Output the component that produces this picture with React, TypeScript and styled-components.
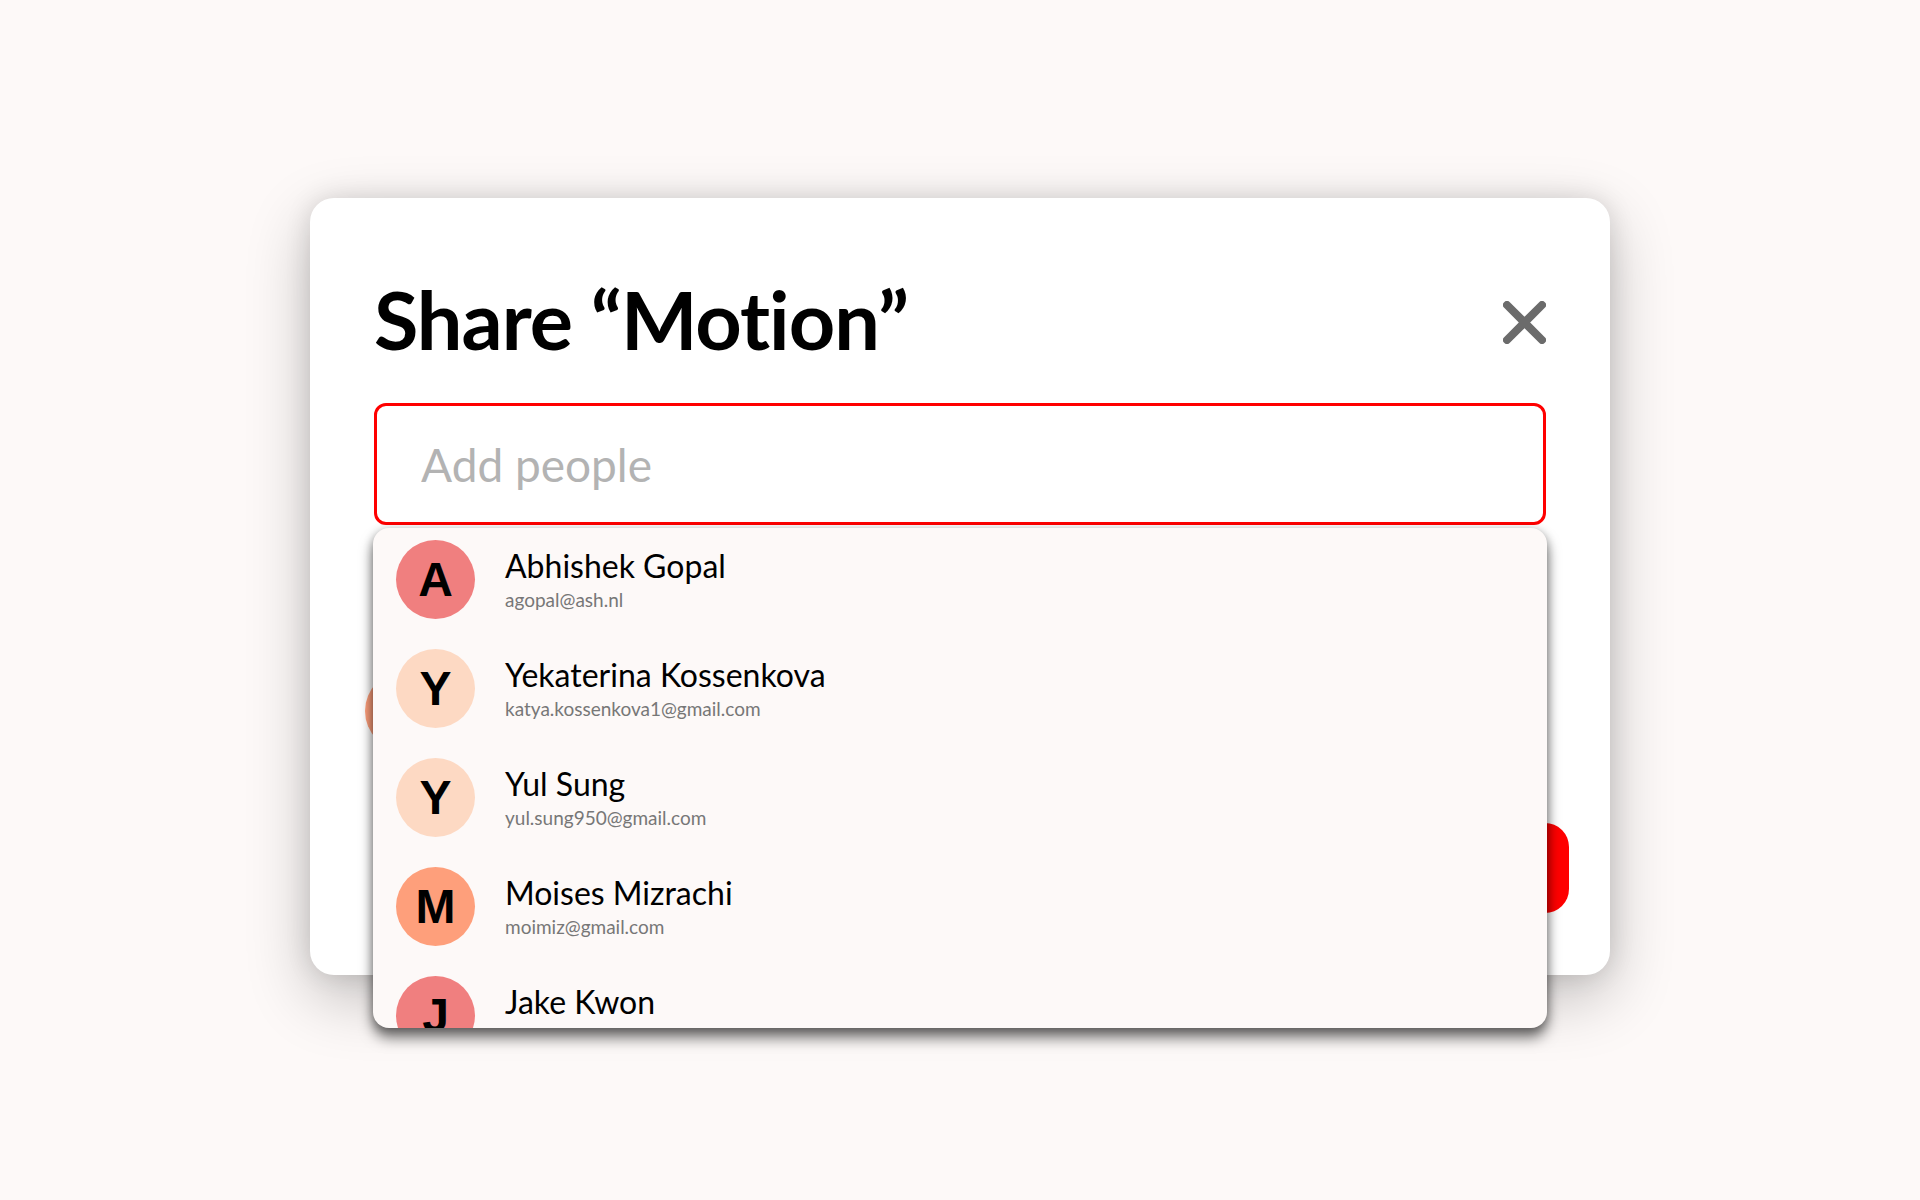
import React from "react";
import styled, { createGlobalStyle } from "styled-components";

const GlobalStyle = createGlobalStyle`
  html, body {
    margin: 0;
    padding: 0;
    background: #fdf9f8;
  }
  * { box-sizing: border-box; }
`;

const Page = styled.div`
  width: 1920px;
  height: 1200px;
  display: flex;
  justify-content: center;
  align-items: flex-start;
  padding-top: 198px;
  background: #fdf9f8;
  font-family: Lato, "Noto Sans", sans-serif;
  overflow: hidden;
`;

const Modal = styled.div`
  width: 1300px;
  height: 777px;
  background: #ffffff;
  border-radius: 24px;
  padding: 80px 64px 62px 64px;
  display: flex;
  flex-direction: column;
  box-shadow: 0 22px 64px rgba(0, 0, 0, 0.24), 0 0 26px rgba(0, 0, 0, 0.12);
`;

const Header = styled.div`
  display: flex;
  align-items: center;
  justify-content: space-between;
  height: 81px;
`;

const Title = styled.h1`
  margin: 0;
  font-family: Lato, "Noto Sans", sans-serif;
  font-weight: 700;
  font-size: 81px;
  line-height: 1;
  color: #000;
  letter-spacing: -1px;
`;

const CloseButton = styled.button`
  border: none;
  background: none;
  padding: 0;
  margin-top: 7px;
  width: 43px;
  height: 43px;
  display: flex;
  cursor: pointer;
`;

const SearchWrap = styled.div`
  position: relative;
  margin-top: 44px;
`;

const SearchInput = styled.input`
  width: 100%;
  height: 122px;
  border: 3px solid #ff0000;
  border-radius: 12px;
  padding: 0 0 0 44px;
  font-family: Lato, "Noto Sans", sans-serif;
  font-size: 46px;
  font-weight: 400;
  color: #000;
  background: #fff;
  outline: none;
  &::placeholder {
    color: #b3b3b3;
  }
`;

const Dropdown = styled.div`
  position: absolute;
  top: calc(100% + 3px);
  left: -1px;
  right: -1px;
  height: 500px;
  overflow: hidden;
  background: #fdf9f8;
  border-radius: 16px;
  box-shadow: 0 10px 14px rgba(0, 0, 0, 0.5), 0 2px 10px rgba(0, 0, 0, 0.3);
  padding: 12px 23px 0 23px;
  display: flex;
  flex-direction: column;
  gap: 30px;
  z-index: 5;
`;

const Row = styled.div`
  display: flex;
  align-items: center;
  gap: 30px;
  flex-shrink: 0;
`;

const Avatar = styled.div<{ $bg: string; $size?: number }>`
  width: ${(p) => p.$size ?? 79}px;
  height: ${(p) => p.$size ?? 79}px;
  border-radius: 50%;
  background: ${(p) => p.$bg};
  display: flex;
  align-items: center;
  justify-content: center;
  font-family: "Liberation Sans", Arial, sans-serif;
  font-weight: 700;
  font-size: 48px;
  color: #000;
  flex-shrink: 0;
`;

const Info = styled.div`
  display: flex;
  flex-direction: column;
  gap: 3px;
`;

const Name = styled.div`
  font-family: Lato, "Noto Sans", sans-serif;
  font-size: 32px;
  line-height: 1.2;
  color: #000;
`;

const Email = styled.div`
  font-family: Lato, "Noto Sans", sans-serif;
  font-size: 19px;
  line-height: 1.2;
  color: #777777;
`;

const OwnerRow = styled.div`
  margin-top: 146px;
  margin-left: -9px;
  display: flex;
  align-items: center;
  height: 80px;
`;

const Footer = styled.div`
  margin-top: 72px;
  margin-right: -23px;
  display: flex;
  justify-content: flex-end;
`;

const DoneButton = styled.button`
  height: 90px;
  width: 220px;
  border: none;
  border-radius: 24px;
  background: #ff0000;
  color: #fff;
  font-family: Lato, "Noto Sans", sans-serif;
  font-size: 32px;
  font-weight: 700;
`;

const people = [
  { letter: "A", bg: "#f07f7f", name: "Abhishek Gopal", email: "agopal@ash.nl" },
  { letter: "Y", bg: "#fdd9c3", name: "Yekaterina Kossenkova", email: "katya.kossenkova1@gmail.com" },
  { letter: "Y", bg: "#fdd9c3", name: "Yul Sung", email: "yul.sung950@gmail.com" },
  { letter: "M", bg: "#fe9f7b", name: "Moises Mizrachi", email: "moimiz@gmail.com" },
  { letter: "J", bg: "#f07f7f", name: "Jake Kwon", email: "jake.kwon@gmail.com" },
];

export default function App() {
  return (
    <>
      <GlobalStyle />
      <Page>
        <Modal>
          <Header>
            <Title>Share “Motion”</Title>
            <CloseButton aria-label="Close">
              <svg width="43" height="43" viewBox="0 0 43 43">
                <path
                  d="M4 4 L39 39 M39 4 L4 39"
                  stroke="#6b6b6b"
                  strokeWidth="8"
                  strokeLinecap="round"
                  fill="none"
                />
              </svg>
            </CloseButton>
          </Header>
          <SearchWrap>
            <SearchInput placeholder="Add people" />
            <Dropdown>
              {people.map((p, i) => (
                <Row key={i}>
                  <Avatar $bg={p.bg}>{p.letter}</Avatar>
                  <Info>
                    <Name>{p.name}</Name>
                    <Email>{p.email}</Email>
                  </Info>
                </Row>
              ))}
            </Dropdown>
          </SearchWrap>
          <OwnerRow>
            <Avatar $bg="#fe9f7b" $size={80} />
          </OwnerRow>
          <Footer>
            <DoneButton>Done</DoneButton>
          </Footer>
        </Modal>
      </Page>
    </>
  );
}
